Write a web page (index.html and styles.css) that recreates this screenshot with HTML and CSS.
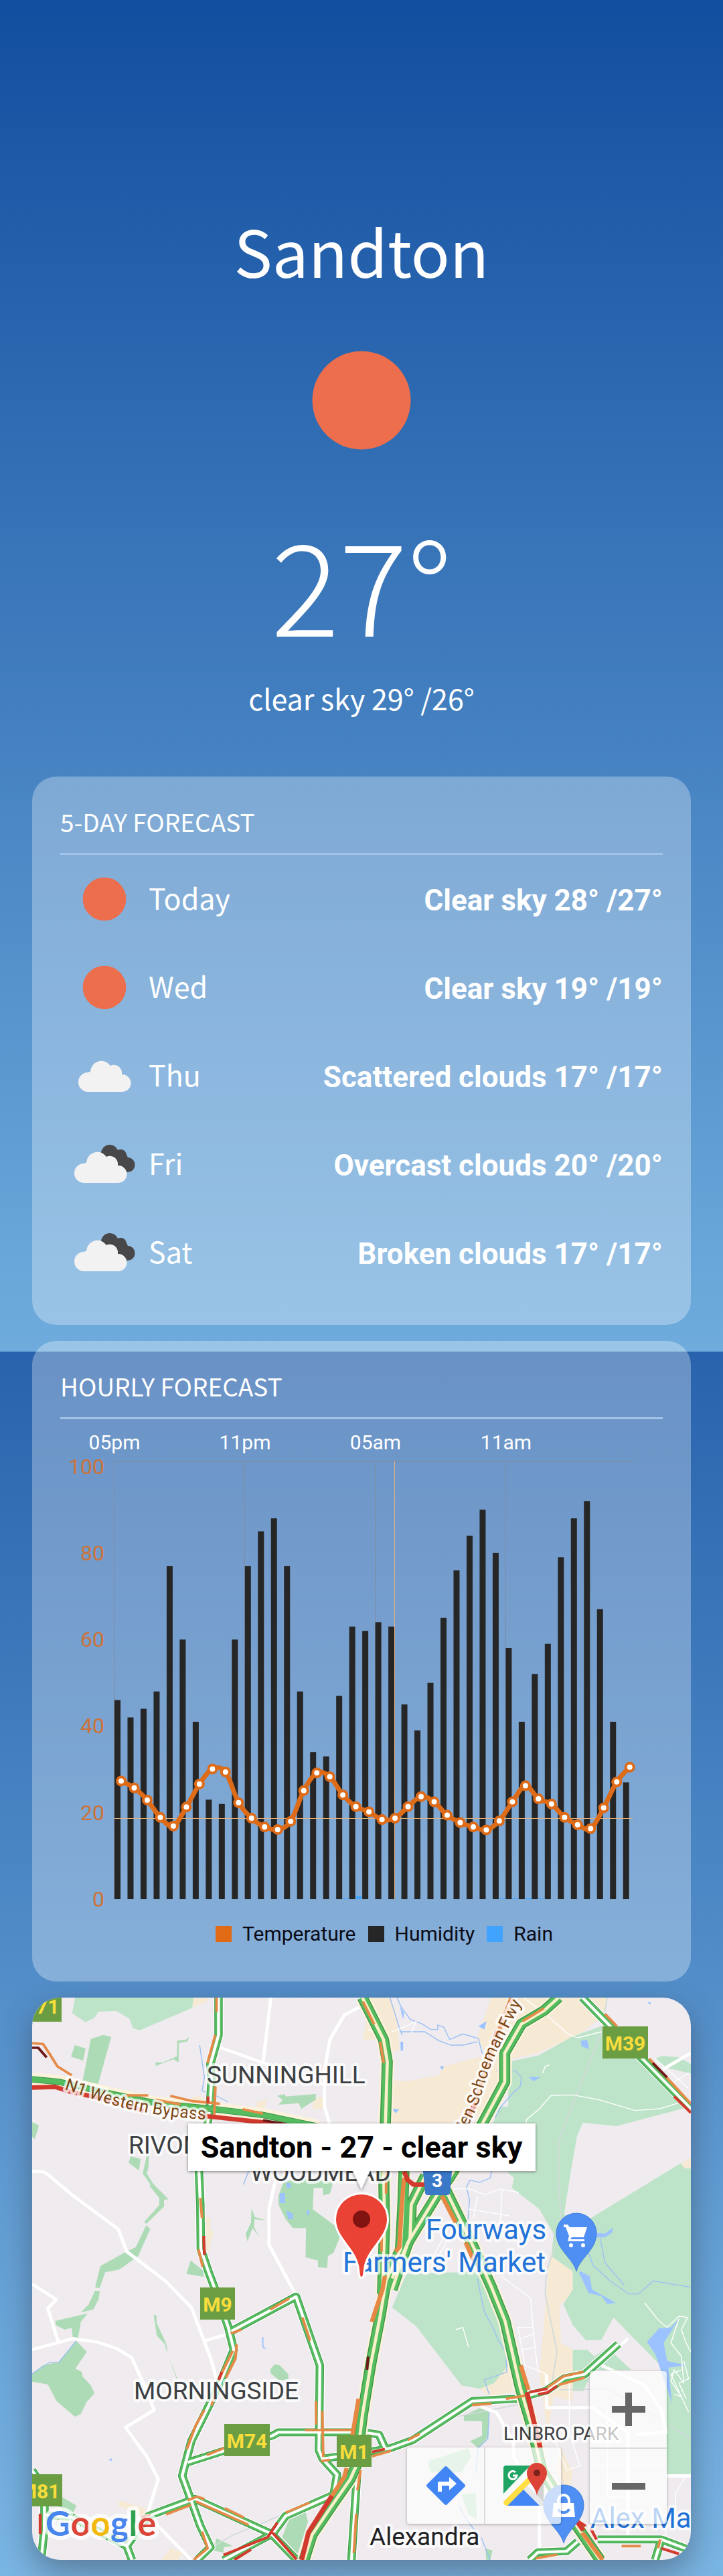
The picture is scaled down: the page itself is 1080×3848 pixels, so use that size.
FILE: index.html
```html
<!DOCTYPE html>
<html lang="en">
<head>
<meta charset="utf-8">
<meta name="viewport" content="width=device-width, initial-scale=1">
<title>Sandton weather</title>
<link rel="stylesheet" href="styles.css">
</head>
<body>
<svg class="sprite" aria-hidden="true">
  <symbol id="icon-sun" viewBox="0 0 100 100"><circle cx="50" cy="50" r="24.500"/></symbol>
  <symbol id="icon-cloud" viewBox="0 0 132 132">
    <path class="cloud-light" d="M42 90a14 14 0 0 1-1-29 13 13 0 0 1 4-1 16.500 17 0 0 1 30-9 12 12 0 0 1 17 9v4a12.500 12.500 0 0 1 1 26z"/>
  </symbol>
  <symbol id="icon-clouds" viewBox="0 0 132 132">
    <path class="cloud-dark" d="M61 50a13 13 0 0 1 25-5 9 9 0 0 1 13 7l2 4a10.500 10.500 0 0 1-1 22H74z"/>
    <path class="cloud-light" d="M36 94a14 14 0 0 1-1-29 13 13 0 0 1 4-1 16.500 17 0 0 1 30-9 12 12 0 0 1 17 9v4a12.500 12.500 0 0 1 1 26z"/>
  </symbol>
</svg>

<main class="page">
  <header class="now">
    <h1 class="now-place">Sandton</h1>
    <svg class="now-icon sun" role="img" aria-label="Clear sky"><use href="#icon-sun"/></svg>
    <p class="now-temp">27°</p>
    <p class="now-desc">clear sky 29° /26°</p>
  </header>

  <section class="card">
    <h2 class="card-title">5-DAY FORECAST</h2>
    <ul class="days">
      <li class="day"><svg class="day-icon sun"><use href="#icon-sun"/></svg><span class="day-name">Today</span><strong class="day-info">Clear sky 28° /27°</strong></li>
      <li class="day"><svg class="day-icon sun"><use href="#icon-sun"/></svg><span class="day-name">Wed</span><strong class="day-info">Clear sky 19° /19°</strong></li>
      <li class="day"><svg class="day-icon"><use href="#icon-cloud"/></svg><span class="day-name">Thu</span><strong class="day-info">Scattered clouds 17° /17°</strong></li>
      <li class="day"><svg class="day-icon"><use href="#icon-clouds"/></svg><span class="day-name">Fri</span><strong class="day-info">Overcast clouds 20° /20°</strong></li>
      <li class="day"><svg class="day-icon"><use href="#icon-clouds"/></svg><span class="day-name">Sat</span><strong class="day-info">Broken clouds 17° /17°</strong></li>
    </ul>
  </section>

  <section class="card">
    <h2 class="card-title">HOURLY FORECAST</h2>
    <svg class="chart" id="chart" viewBox="0 0 900 740" role="img" aria-label="Hourly temperature, humidity and rain"></svg>
    <ul class="legend">
      <li class="legend-item"><i class="swatch swatch-temp"></i>Temperature</li>
      <li class="legend-item"><i class="swatch swatch-humidity"></i>Humidity</li>
      <li class="legend-item"><i class="swatch swatch-rain"></i>Rain</li>
    </ul>
  </section>

  <section class="map" aria-label="Map of Sandton">
    <svg class="map-canvas" viewBox="0 0 984 840">
      <defs>
        <g id="roads">
          <path d="M914 72V240L880 370 885 440 878 560 868 640 832 850 838 1000 840 1200 872 1300 900 1380 955 1550 978 1650 920 1800 800 2060 762 2215 838 2440 880 2535 825 2592"/>
          <path d="M968 1567L1238 1412 1338 1720 1334 2100 1350 2140 1410 2210 1395 2300 1195 2395 1140 2475 935 2592"/>
          <path d="M785 2155L945 2100 1140 2035 1165 2020H1516L1585 2030 1612 2095M1345 2140L1556 2105 1630 2092 1726 2055 1976 1880 2156 1870 2286 1833 2360 1778 2446 1760 2586 1625"/>
          <path d="M185 2390L300 2400 530 2530 620 2395 815 2318 1135 2475 1240 2592M530 2530L552 2592M186 2330V2450L172 2592M134 2190L190 2280"/>
          <path d="M1495 2180L1470 2592M2216 2592L2250 2558 2370 2553 2416 2510M2500 2500H2766L2890 2550M2766 2500L2740 2592"/>
          <path d="M2436 72L2566 215 2686 345 2890 570"/>
        </g>
        <g id="freeways">
          <path d="M1516 72L1604 260 1620 360 1612 640 1605 850 1608 1100 1600 1400"/>
          <path d="M1690 850L1685 1000 1675 1200 1615 1340 1590 1500 1550 1720 1515 1950 1490 2170 1465 2230 1400 2330 1305 2480 1272 2592"/>
          <path d="M2336 72L2276 130 2181 190 2111 320V450L2016 640 1880 880 1826 960 1706 1170 1640 1380"/>
          <path d="M1840 880L1976 1180 2056 1370 2112 1520 2176 1820 2226 2000 2266 2190 2400 2420 2510 2592"/>
          <path d="M1780 870L1720 1000 1715 1150 1640 1330"/>
        </g>
        <g id="bypass"><path d="M134 438L250 450 450 500 650 545 880 570 1100 598 1330 650"/></g>
      </defs>

      <rect class="land" width="984" height="840"/>
      <g class="ground" transform="scale(.35714 .33333) translate(-134.4 -72)">
        <g class="sand">
          <path d="M809 72H870L865 90 804 118zM800 520L830 510 870 540H800zM1072 542L1118 525 1100 590H1080zM1315 520H1350V570L1305 573zM855 1050L880 1060 880 1115 895 1120 870 1215 855 1200z"/>
          <path d="M500 2328L510 2328 610 2362 600 2400 495 2350zM675 2592L715 2540 765 2560 745 2592z"/>
          <path d="M1546 72L1626 72 1656 120 1671 310 1600 320 1600 260 1516 260 1530 190z"/>
          <path d="M2056 72H2540L2530 150 2416 240 2250 320 2126 350 2060 560 1936 640H1640L1636 440 1700 447 1836 420 1856 380 1966 350 2036 330 1996 250z"/>
          <path d="M2300 1220L2396 1260V1380L2386 1410 2340 1450 2346 1620 2396 1650V1880L2316 1860 2290 2020 2256 1760 2276 1520z"/>
          <path d="M2006 1825L2066 1800 2126 1710 2146 1840 2046 1860zM2340 2080L2396 2200 2380 2290 2330 2200z"/>
        </g>
        <g class="park">
          <path d="M314 72L302 142 358 182 395 162 412 135 486 131 542 167 556 209 585 218 804 118 809 72z"/>
          <path d="M2126 360L2256 330 2396 245 2516 200 2560 210 2690 350 2830 530 2890 560V2210H2790L2780 1740 2566 1505 2516 1605 2451 1607 2396 1540 2356 1445 2396 1380V1300L2306 1230 2316 1130 2256 1020 2141 925 2150 880 2120 853H2230V640H2060L2090 560 2126 560z"/>
          <path d="M2740 345L2770 333 2840 340 2890 370V412L2780 385z"/>
          <path d="M1640 1460L1700 1310 2000 1300 2096 1520 2126 1720 2066 1800 2006 1825 1931 1810 1741 1545z"/>
          <path d="M2396 1650H2456L2486 1680 2540 1640 2640 1740H2480L2440 1835H2396z"/>
        </g>
        <path class="land" d="M2438 632L2579 648 2676 620 2890 560V790L2846 815 2456 1070 2359 1045 2386 860 2414 690z"/>
        <path class="sand" d="M2846 815L2890 790V838H2866z"/>
        <g class="wood">
          <path d="M380 257L431 239 465 248 405 480 345 450zM313 285L358 300 348 354 297 337z"/>
          <path d="M649 362H682L740 335 742 264 775 262 790 250 785 268 748 275 747 362 725 348 652 378zM134 630L163 645 145 706 134 695z"/>
          <path d="M547 783L588 795 581 847 538 812zM613 783H623L621 830 614 860 640 905 705 976 686 978V1008L612 1086 603 1078 666 1002V970L625 915 630 910 597 860z"/>
          <path d="M612 1092L628 1110 578 1230 500 1290 440 1303 416 1375 398 1370 420 1275 520 1215 568 1190zM398 1385L418 1388 412 1425 390 1470 338 1483 370 1448z"/>
          <path d="M231 1521L367 1487 338 1525 326 1600H305L300 1552 270 1560 234 1540zM319 1610L363 1660 315 1735 342 1750 345 1770 380 1810 395 1845 362 1885 338 1938 313 1950 235 1878 200 1805 134 1793V1757L180 1720 245 1705z"/>
          <path d="M643 1495H654L655 1530 690 1610 698 1635V1665L690 1625 656 1587zM705 1680L740 1775V1785zM1150 1715L1170 1720 1206 1760 1207 1785H1165L1132 1755V1735zM780 1310L797 1250 855 1300 850 1323z"/>
          <path d="M1052 1015L1065 1055 1112 1070 1065 1065 1062 1100 1084 1143 1056 1105 1035 1165 1028 1130 1050 1080zM1160 512L1190 505 1195 515 1322 504 1320 530 1260 570 1250 545 1165 552 1183 530z"/>
          <path d="M1165 960L1185 900 1260 880 1393 900 1380 950 1352 958 1350 925H1312L1308 1020 1420 1110V1150L1395 1215 1372 1230 1368 1283 1330 1280V1250L1278 1235 1280 1105H1225L1195 1065 1165 1000z"/>
          <path d="M262 2312L320 2348 300 2395 240 2350zM1278 2375L1288 2420 1245 2565 1180 2490 1210 2410zM905 2495L973 2530 935 2535V2560L895 2550z"/>
          <path d="M1940 1945L2010 1910 2046 1930 2042 2040 2000 2090 1966 2060 2016 2035V1970L1940 1968zM1790 2150L1960 2090 1970 2130 1930 2200 1800 2200zM1930 2300L1990 2290 1995 2410 1960 2390zM2030 2540L2060 2550 2050 2592H2034z"/>
        </g>
        <g class="water">
          <path d="M1170 948H1192V993H1170zM1198 900L1216 905V925H1198zM1198 1026L1225 1040V1065H1205zM1282 1025H1294V1050L1282 1040z"/>
          <path d="M2001 200L2035 178 2026 215zM2430 265L2456 262 2464 302 2432 290zM2210 427L2260 430 2232 447zM1640 570L1670 573 1655 590zM1675 270H1686V310H1676zM1672 110L1690 140 1686 170zM1840 380L1856 378 1850 398zM2710 90L2725 95 2715 104zM455 2142L470 2135 465 2150zM1096 1594H1102V1635L1116 1650 1098 1640z"/>
          <path d="M2431 1300L2466 1320 2476 1380 2576 1440 2541 1445 2516 1410 2461 1395 2420 1300zM2490 1125L2530 1130 2565 1102 2560 1125 2530 1147H2490z"/>
          <path d="M2841 1510L2776 1620 2791 1700 2871 1720 2796 1730 2811 1890 2766 1750 2741 1670 2706 1615 2756 1555 2806 1550z"/>
        </g>
        <g class="stream">
          <path d="M835 285L855 430 845 490 900 510 955 540M1040 850L1018 910M134 1758L210 1705 245 1708 319 1610"/>
          <path d="M1631 72L1671 210 1682 240M1661 72L1676 110 1716 170 1766 190 1801 215H1831V195L1856 205 1881 260 1936 235 2001 255 2016 320 2036 330M1676 225H1776L1836 265 1886 285H1936L1996 270M2076 400H2156L2181 430 2176 470 2146 500 2096 560 2071 610"/>
          <path d="M2056 850L2051 880 2006 900 1966 890 1951 920 1964 980 1956 1080M2456 1200L2480 1270 2550 1340 2630 1400H2670L2732 1342 2890 1370M2510 1150L2530 1260 2610 1360M1996 1330L2026 1480 2066 1560 2080 1600 2116 1660 2120 1750 2026 1785 2046 1850M2046 1930L2040 2050 2000 2090 1990 2200M1920 2350L1950 2410 2016 2500 2050 2592"/>
        </g>
        <g class="rail"><path d="M2540 72L2512 240 2406 520 2336 720V900L2346 1040 2340 1130 2286 1300 2280 1400 2330 1660 2310 1790M895 2530L975 2480 1170 2395M1910 1950L2170 1895M2340 1830L2540 1825 2760 1960 2890 2050"/></g>
        <g class="street">
          <path d="M134 850L180 852 200 865 300 955 495 1110 530 1210 690 1340 800 1460 850 1600 885 1700 905 1780M1133 72L1100 365M920 295L1350 460M1530 100L1440 150 1380 260 1357 400V560L1380 640"/>
          <path d="M1150 900L1125 1020V1180L1250 1430M134 1355L235 1425 200 1465 245 1620M134 1650L305 1600 405 1615 490 1645 550 1685 600 1800 645 1920 525 1998 615 2130 662 2230 615 2390 800 2592M850 1612L950 1580"/>
          <path d="M2890 320L2770 395M2010 1905L2076 1930 2146 2060 2150 2130 2256 2370V2540M2516 1720L2696 1810 2766 1920 2786 2020 2660 2030M2286 1760V1910H2476L2626 2020V2500M2786 2215H2890M2626 1600L2586 1640"/>
        </g>
        <g class="lane">
          <path d="M2190 72L2286 150 2376 235 2416 252 2516 225M2201 640V620L2256 570 2306 510 2396 508 2506 530 2656 578 2760 570 2836 545M2740 345L2880 480M2880 410L2820 450"/>
          <path d="M1540 215L1560 225 1550 205M1640 225L1700 200 1740 180 1720 230M2270 410L2280 380 2300 373M1896 930L1960 928 2030 955 2090 930 2170 945M1998 960L1980 1060M1960 1020L2130 1050M2100 930L2090 1130M1906 1040L1800 1260M1920 1060L1830 1240"/>
          <path d="M2096 1320L2220 1420 2230 1560 2250 1750M2166 1550L2196 1720 2286 1760M2166 1550H2226M2180 1600L2230 1580M2185 1650L2235 1640M2381 1780V2020L2426 2170 2370 2190 2296 1990M2540 1920V2310H2640M2480 2170H2780M2870 2215L2826 2290V2400M2786 2370V2500M1906 1560L1936 1550 1960 1640"/>
          <path d="M2696 1440L2756 1520 2790 1550 2840 1500 2876 1505 2850 1560 2870 1620 2890 1660M2840 1510L2806 1620 2850 1680 2860 1800 2820 1740 2806 1790 2850 1860 2820 1850M2860 1700L2880 1780 2840 1800 2870 1870M2850 1740L2806 1760 2880 1930"/>
        </g>

        <use href="#bypass" class="bed-wide"/>
        <use href="#roads" class="bed"/><use href="#roads" class="edge"/><use href="#roads" class="free"/><use href="#roads" class="median"/>
        <use href="#freeways" class="bed-wide"/><use href="#freeways" class="edge-wide"/><use href="#freeways" class="free-wide"/><use href="#freeways" class="median-sand"/>
        <use href="#bypass" class="edge-bypass"/><use href="#bypass" class="free-bypass"/>
        <g class="slow">
          <path d="M906 72V135M900 240L868 365M901 470L896 600M838 970L845 1060M830 1200L848 1280M974 1655L925 1760M990 1625L985 1690 945 1775M905 1820L885 1900M855 1920L818 1990 782 2095"/>
          <path d="M1130 1470L1210 1420M965 1577L1010 1560M1265 1505L1297 1610M1322 1880V1985M1348 1925L1352 2130M1275 2010H1480M940 2090L865 2122M1342 2150L1380 2143M695 2388L800 2345M785 2325L825 2308 855 2320M940 2360L1020 2402M820 2330L1040 2435M845 2465L868 2540 810 2592M1195 2380L1295 2335M1508 2190L1495 2280M1490 2385L1480 2560"/>
          <path d="M1556 2128L1636 2103M1706 2055L1756 2027M1974 1898L2056 1892M2116 1870L2200 1855M2290 1820L2356 1770 2440 1748M2336 1808L2446 1775M2240 2585L2330 2568M2600 2530H2680M2762 2500L2752 2540"/>
          <path d="M1518 90L1565 192M1590 270L1605 365M1615 850V950M1596 1080V1210M2275 120L2186 178M2530 145L2580 200M2715 345L2890 548"/>
          <path d="M134 276L180 280 205 320 240 380 300 420M525 510H620M712 512L800 535 920 548M650 530L755 550M1015 572L1100 592"/>
        </g>
        <g class="slow-wide">
          <path d="M1690 880L1680 1010 1670 1190 1655 1210M1610 1320L1600 1380 1555 1525M1500 1870L1470 2060M1450 2180L1440 2220 1388 2305M1848 960L1906 1080M1948 1170L1986 1260M2178 1720L2210 1830M2435 2470L2520 2592"/>
          <path d="M2140 72L2070 270 2020 430 1990 540"/>
        </g>
        <g class="jam">
          <path d="M870 515V545M852 1140L855 1225M928 1750L915 1785M168 2385V2475M1160 2425L1120 2490 935 2570M1140 2470L1240 2590M1050 2545L980 2592M1556 2108L1610 2095M2216 1840L2290 1825M2250 1850L2290 1842 2330 1812M2820 515L2890 588M2766 2540L2840 2565M2420 2420L2450 2440M2470 2450L2495 2500M590 2400L630 2390"/>
          <path class="wide" d="M134 475L230 472 300 495 450 530 600 580M835 600L1050 625 1180 640M1388 2305L1290 2470 1262 2592M2204 1840L2236 1985 2260 2090M2400 2400L2440 2460M1690 850L1705 890 1730 910H1780M2080 220L2060 290M1990 545L1960 600"/>
        </g>
        <g class="stop"><path d="M134 297H160L195 340M1100 622L1200 640M2730 365L2790 430M1540 1680L1535 1740"/></g>
      </g>

      <g class="area-label">
        <text x="261" y="128">SUNNINGHILL</text>
        <text x="144" y="233">RIVONIA</text>
        <text x="326" y="274">WOODMEAD</text>
        <text x="152" y="600">MORNINGSIDE</text>
      </g>
      <text class="area-label small" x="704" y="661">LINBRO PARK</text>
      <text class="area-label town" x="504" y="818">Alexandra</text>
      <path id="bypass-line" fill="none" d="M48 137C95 151 145 178 290 184"/>
      <text class="road-label"><textPath href="#bypass-line">N1 Western Bypass</textPath></text>
      <path id="fwy-line" fill="none" d="M642 206C672 162 672 130 692 85L750 -30"/>
      <text class="road-label"><textPath href="#fwy-line">Ben Schoeman Fwy</textPath></text>
      <g class="place-label">
        <text x="588" y="361">Fourways</text>
        <text x="464" y="410">Farmers' Market</text>
        <text x="834" y="792">Alex Mall</text>
      </g>

      <g class="shield">
        <rect x="-24" y="-12" width="68" height="48"/><text x="10" y="24">M71</text>
        <rect x="852" y="43" width="68" height="48"/><text x="886" y="79">M39</text>
        <rect x="251" y="433" width="52" height="48"/><text x="277" y="469">M9</text>
        <rect x="287" y="637" width="68" height="48"/><text x="321" y="673">M74</text>
        <rect x="455" y="653" width="52" height="48"/><text x="481" y="689">M1</text>
        <rect x="-23" y="712" width="68" height="48"/><text x="11" y="748">M81</text>
      </g>
      <path class="national" d="M583 250H628L624 292Q623 295 620 295H591Q588 295 587 292z"/>
      <text class="national-text" x="605" y="283">3</text>

      <g class="poi">
        <path d="M813 409C808 389 783 377 783 352A30 30 0 0 1 843 352C843 377 818 389 813 409z"/>
        <path d="M794 815C789 795 764 783 764 758A30 30 0 0 1 824 758C824 783 799 795 794 815z"/>
      </g>
      <g class="poi-glyph">
        <path d="M794 339H800L803 343H829L824 358H806L804 361H825V364H800L802 356 797 343H794z"/>
        <circle cx="805" cy="370" r="3"/><circle cx="823" cy="370" r="3"/>
        <path d="M779 755H809L811 776H777z"/><path class="handle" d="M786 756V752C786 740 802 740 802 752V756"/>
        <path class="smile" d="M786 764C789 771 799 771 802 764"/>
      </g>
      <path class="marker" d="M492 417C489 417 490 409 488 400C482 373 454 358 454 331A38 37 0 0 1 530 331C530 358 502 373 496 400C494 409 495 417 492 417z"/>
      <circle class="marker-eye" cx="492" cy="331" r="13"/>

      <g class="logo">
        <text x="20" y="804"><tspan class="g-blue">G</tspan><tspan class="g-red">o</tspan><tspan class="g-yellow">o</tspan><tspan class="g-blue">g</tspan><tspan class="g-green">l</tspan><tspan class="g-red">e</tspan></text>
      </g>
    </svg>

    <p class="callout">Sandton - 27 - clear sky</p>

    <div class="map-tools">
      <div class="tool-row">
        <button class="tool" type="button" aria-label="Directions">
          <svg class="tool-icon" viewBox="0 0 60 60"><path fill="#4285f4" d="M28 2Q30 0 32 2L58 28Q60 30 58 32L32 58Q30 60 28 58L2 32Q0 30 2 28z"/><path fill="#fff" d="M18 39V26Q18 24 20 24H35V17L46 27 35 37V30H24V39z"/></svg>
        </button>
        <button class="tool" type="button" aria-label="Open in Google Maps">
          <svg class="tool-icon" viewBox="0 0 60 60"><path fill="#1fa463" d="M4 0H40L0 42V4Q0 0 4 0z"/><path fill="#d2d2d2" d="M40 18L60 0V56Q60 60 56 60z"/><path fill="#4285f4" d="M30 35L55 60H5z"/><path fill="#ffdf43" d="M40 14V26L6 60Q0 60 0 54z"/><path fill="#e6e8ec" d="M36 30L60 54Q60 60 54 60L30 36z"/><path class="mini-g" d="M18 10A6 6 0 1 0 20 15H14"/><path fill="#db4437" d="M50 45C48 31 35 24 35 11A15 15 0 0 1 65 11C65 24 52 31 50 45z"/><circle cx="50" cy="11" r="5" fill="#7b231c"/></svg>
        </button>
      </div>
      <div class="tool-column">
        <button class="tool" type="button" aria-label="Zoom in"><svg class="tool-icon" viewBox="0 0 60 60"><path class="glyph" d="M5 30H55M30 5V55"/></svg></button>
        <button class="tool" type="button" aria-label="Zoom out"><svg class="tool-icon" viewBox="0 0 60 60"><path class="glyph" d="M5 30H55"/></svg></button>
      </div>
    </div>
  </section>
</main>
<script src="chart.js"></script>
</body>
</html>
```
FILE: styles.css
```css
* { box-sizing: border-box; }

body {
  margin: 0;
  color: #fff;
  font-family: "Noto Sans CJK SC", "Noto Sans", sans-serif;
  background:
    linear-gradient(#124e9f, #6facdd) top / 100% 2019px no-repeat,
    linear-gradient(#1250a0, #2963ad 2019px, #7ab6e4);
}

h1, h2, p, ul { margin: 0; padding: 0; font-weight: 400; }
ul { list-style: none; }
.sprite { position: absolute; width: 0; height: 0; }

.page {
  display: flex;
  flex-direction: column;
  gap: 24px;
  padding: 300px 48px 24px;
}

.now {
  display: flex;
  flex-direction: column;
  align-items: center;
  padding-bottom: 42px;
}
.now-place { font-size: 96px; line-height: 148px; }
.now-icon { width: 300px; height: 300px; }
.now-temp { font-size: 190px; font-weight: 300; line-height: 242px; }
.now-desc { font-size: 43px; line-height: 104px; }

.sun { fill: #ec6e4c; }
.cloud-light { fill: #f2f2f2; }
.cloud-dark { fill: #48484a; }

.card {
  padding: 42px;
  border-radius: 36px;
  background: rgba(255, 255, 255, .3);
}
.card-title {
  padding-bottom: 22px;
  border-bottom: 3px solid #a3c3e8;
  font-size: 37px;
  line-height: 50px;
}

.day { display: flex; align-items: center; height: 132px; }
.day-icon { width: 132px; height: 132px; }
.day-name { flex: 1; padding-bottom: 6px; font-size: 43px; }
.day-info { padding-top: 4px; font-family: Roboto, sans-serif; font-size: 44px; font-weight: 700; }

.chart { display: block; width: 100%; font-family: Roboto, sans-serif; font-size: 30px; }
.chart .hour { fill: #fff; text-anchor: middle; }
.chart .scale { fill: #cb733a; font-size: 32px; text-anchor: end; }
.chart .grid { fill: none; stroke: #7f8da0; stroke-width: 1; }
.chart .guide { fill: none; stroke: #e3b27c; stroke-width: 1; }
.chart .humidity { fill: #262626; }
.chart .rain { fill: #40a4ff; }
.chart .temp { fill: none; stroke: #dd6b17; stroke-width: 7; }
.chart .dot { fill: #fff; stroke: #dd6b17; stroke-width: 4; }

.legend {
  display: flex;
  justify-content: center;
  gap: 18px;
  padding-left: 68px;
  color: #0b0b16;
  font-family: Roboto, sans-serif;
  font-size: 30px;
  line-height: 58px;
}
.legend-item { display: flex; align-items: center; gap: 16px; }
.swatch { width: 24px; height: 24px; }
.swatch-temp { background: #e06b14; }
.swatch-humidity { background: #262626; }
.swatch-rain { background: #40a4ff; }

.map {
  position: relative;
  overflow: hidden;
  border-radius: 42px;
  box-shadow: 0 18px 48px rgba(50, 50, 60, .45);
  font-family: Roboto, sans-serif;
}
.map-canvas { display: block; width: 100%; }
.land { fill: #efebee; }
.sand { fill: #f6ead5; }
.park { fill: #bde4c8; }
.wood { fill: #addbb6; }
.water { fill: #9cc3ff; }
.stream, .rail, .street, .lane { fill: none; stroke-width: 4; }
.stream { stroke: #9cc0f4; }
.rail { stroke: #d2dadb; stroke-width: 5; }
.street { stroke: #fff; stroke-width: 14; stroke-linejoin: round; }
.lane { stroke: #fff; }
.bed, .bed-wide, .edge, .edge-wide, .free, .free-wide, .median, .median-sand,
.edge-bypass, .free-bypass, .slow, .slow-wide, .jam, .stop { fill: none; stroke-linejoin: round; }
.bed { stroke: #fff; stroke-width: 42; }
.bed-wide { stroke: #fdf3dc; stroke-width: 60; }
.edge { stroke: #419a4b; stroke-width: 35; }
.free { stroke: #57be62; stroke-width: 29; }
.median { stroke: #fff; stroke-width: 12; }
.edge-wide { stroke: #3c9446; stroke-width: 46; }
.free-wide { stroke: #55bd60; stroke-width: 38; }
.median-sand { stroke: #fbf0c9; stroke-width: 13; }
.edge-bypass { stroke: #3c9446; stroke-width: 28; }
.free-bypass { stroke: #55bd60; stroke-width: 22; }
.slow { stroke: #e58a48; stroke-width: 11; }
.slow-wide { stroke: #e68743; stroke-width: 18; }
.jam { stroke: #d23a2e; stroke-width: 12; }
.jam .wide { stroke-width: 20; }
.stop { stroke: #6e1a1a; stroke-width: 11; }

.area-label, .road-label, .place-label, .logo {
  paint-order: stroke;
  stroke: rgba(255, 255, 255, .75);
  stroke-width: 8px;
  stroke-linejoin: round;
}
.area-label { fill: #3c4043; font-size: 37px; }
.small { font-size: 28px; }
.town { fill: #202124; }
.road-label { fill: #7a4410; font-size: 25px; }
.place-label { fill: #2273d8; font-size: 42px; }
.shield { fill: #6b9e42; font-size: 30px; font-weight: 700; text-anchor: middle; }
.shield text { fill: #f8dd3d; }
.national { fill: #3a78c8; }
.national-text { fill: #fff; font-size: 28px; font-weight: 700; text-anchor: middle; }
.poi { fill: #4f8ff3; stroke: #417ddd; stroke-width: 1; }
.poi-glyph { fill: #fff; }
.poi-glyph .handle { fill: none; stroke: #fff; stroke-width: 4; }
.poi-glyph .smile { fill: none; stroke: #4f8ff3; stroke-width: 4; }
.marker { fill: #ea4335; stroke: #fff; stroke-width: 6; paint-order: stroke; }
.marker-eye { fill: #811411; }
.logo { font-family: Lato, sans-serif; font-size: 52px; font-weight: 700; stroke-width: 12px; }
.g-blue { fill: #4885ed; }
.g-red { fill: #db4437; }
.g-yellow { fill: #f4b90f; }
.g-green { fill: #2fa14f; }

.callout {
  position: absolute;
  top: 188px;
  left: 50%;
  padding: 0 19px;
  transform: translateX(-50%);
  background: #fff;
  color: #000;
  font-size: 45px;
  font-weight: 700;
  line-height: 71px;
  white-space: nowrap;
  filter: drop-shadow(0 1px 2px rgba(0, 0, 0, .5));
}
.callout::after {
  content: "";
  position: absolute;
  top: 100%;
  left: 50%;
  margin-left: -13px;
  border: solid transparent;
  border-width: 28px 13px 0;
  border-top-color: #fff;
}

.map-tools {
  position: absolute;
  right: 36px;
  bottom: 54px;
  display: flex;
  align-items: flex-end;
  gap: 43px;
}
.tool-row, .tool-column {
  display: flex;
  border-radius: 4px;
  background: rgba(255, 255, 255, .7);
  box-shadow: 0 1px 4px rgba(0, 0, 0, .3);
}
.tool-column { flex-direction: column; }
.tool {
  display: flex;
  align-items: center;
  justify-content: center;
  width: 115px;
  height: 114px;
  padding: 0;
  border: 0;
  background: none;
}
.tool-row .tool + .tool { border-left: 2px solid #dcdcdc; }
.tool-column .tool + .tool { border-top: 2px solid #dcdcdc; }
.tool-icon { width: 60px; height: 60px; overflow: visible; }
.glyph { fill: none; stroke: #666; stroke-width: 10; }
.mini-g { fill: none; stroke: #fff; stroke-width: 3; }
```
FILE: chart.js
```js
const humidity = [46, 42, 44, 48, 77, 60, 41, 23, 22, 60, 77, 85, 88, 77, 48, 34, 33, 47, 63, 62,
  64, 63, 45, 39, 50, 65, 76, 84, 90, 80, 58, 41, 52, 59, 79, 88, 92, 67, 41, 27];
const temperature = [27.3, 25.7, 22.9, 18.9, 16.9, 21.3, 26.6, 30.1, 29.4, 22.3, 18.7, 16.7, 16.1,
  18, 25.1, 29.2, 28.3, 24.1, 21.4, 20.2, 18.4, 18.7, 21.4, 23.7, 22.5, 19.4, 17.7, 16.7, 16, 18.1,
  22.5, 26.2, 23.2, 22, 18.9, 17.2, 16.3, 21.1, 27.1, 30.5];
const rain = { 17: 0.2, 18: 0.7, 29: 0.2, 30: 0.2, 31: 0.3, 32: 0.2 };
const hours = ['05pm', '11pm', '05am', '11am'];

const plot = { left: 81, right: 855, top: 63, bottom: 717 };
const unit = 6.465;
const step = 19.48;
const y = value => plot.bottom - value * unit;
const parts = [];

parts.push(`<path class="grid" d="M${plot.left} ${plot.top}.5H${plot.right}"/>`);
hours.forEach((hour, i) => {
  const x = plot.left + i * 195;
  parts.push(`<path class="grid" d="M${x - 1}.5 ${plot.top}V${plot.bottom}"/>`);
  parts.push(`<text class="hour" x="${x}" y="45">${hour}</text>`);
});
for (let v = 0; v <= 100; v += 20) {
  parts.push(`<text class="scale" x="66" y="${Math.round(y(v) + 11)}">${v}</text>`);
}
humidity.forEach((v, i) => {
  parts.push(`<rect class="humidity" x="${plot.left + i * step}" y="${y(v)}" width="9" height="${v * unit}"/>`);
});
Object.entries(rain).forEach(([i, v]) => {
  parts.push(`<rect class="rain" x="${plot.left + 10 + i * step}" y="${y(v)}" width="9" height="${v * unit}"/>`);
});
parts.push(`<path class="guide" d="M${plot.left} 596.5H${plot.right}M499.5 ${plot.top}V${plot.bottom}"/>`);

const points = temperature.map((v, i) => [91 + i * step, y(v)]);
let line = `M${points[0]}`;
for (let i = 1; i < points.length; i++) {
  const before = points[i - 2] || points[i - 1];
  const a = points[i - 1];
  const b = points[i];
  const after = points[i + 1] || b;
  line += `C${a[0] + (b[0] - before[0]) / 6} ${a[1] + (b[1] - before[1]) / 6} ` +
    `${b[0] - (after[0] - a[0]) / 6} ${b[1] - (after[1] - a[1]) / 6} ${b}`;
}
parts.push(`<path class="temp" d="${line}"/>`);
points.forEach(([cx, cy]) => parts.push(`<circle class="dot" cx="${cx}" cy="${cy}" r="6"/>`));

document.getElementById('chart').innerHTML = parts.join('');
```
